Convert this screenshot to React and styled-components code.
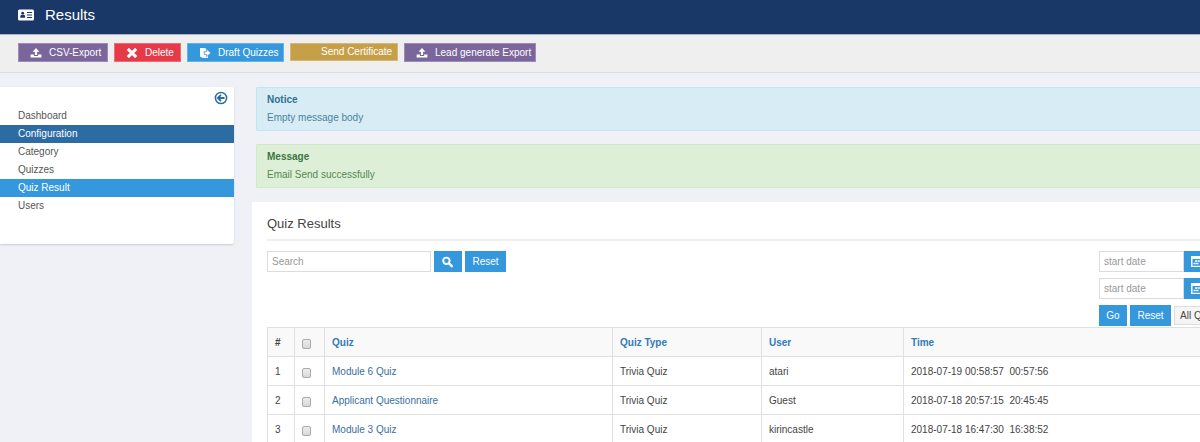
import React from 'react';
import styled, { createGlobalStyle } from 'styled-components';

const GlobalStyle = createGlobalStyle`
  *, *::before, *::after { box-sizing: border-box; }
  body {
    margin: 0;
    background: #f0f1f6;
    color: #444;
    font-family: "Liberation Sans", Arial, sans-serif;
    font-size: 10px;
    line-height: 14px;
    overflow-x: hidden;
  }
  button, input, select { font: inherit; margin: 0; border-radius: 0; }
  h1, h2, h3, p, ul { margin: 0; padding: 0; }
`;

const TopBar = styled.header`
  display: flex;
  align-items: center;
  gap: 11px;
  height: 35px;
  padding: 0 18px 4px;
  background: #1a3867;
  border-bottom: 1px solid #a9b3c6;
  color: #fff;
`;

const PageTitle = styled.h1`
  font-size: 15px;
  line-height: 20px;
  font-weight: 400;
`;

const Toolbar = styled.div`
  display: flex;
  align-items: flex-start;
  gap: 6px;
  height: 38px;
  padding: 8px 18px;
  background: #efefef;
  border-bottom: 1px solid #dddde1;
`;

const tones = {
  purple: '#7b669c',
  red: '#e63a48',
  blue: '#3598dc',
  gold: '#c5a048',
};

const ToolButton = styled.button`
  display: flex;
  align-items: center;
  gap: 7px;
  width: ${(p) => p.$width}px;
  height: ${(p) => (p.$plain ? 18 : 19)}px;
  padding: 0 0 0 11px;
  border: 1px solid rgba(255, 255, 255, 0.25);
  background: ${(p) => tones[p.$tone]};
  color: #fff;
  white-space: nowrap;
`;

const IconSlot = styled.span`
  display: flex;
  flex: 0 0 12px;
`;

const Columns = styled.div`
  display: flex;
  align-items: flex-start;
  gap: 18px;
  padding-top: 14px;
`;

const Sidebar = styled.nav`
  flex: 0 0 234px;
  padding: 4px 0 29px;
  background: #fff;
  border-radius: 0 2px 2px 0;
  box-shadow: 0 1px 2px rgba(0, 0, 0, 0.15);
`;

const CollapseRow = styled.div`
  display: flex;
  justify-content: flex-end;
  height: 16px;
  padding-right: 6px;
`;

const CollapseButton = styled.button`
  display: flex;
  padding: 0;
  border: 0;
  background: none;
  color: #2d6ca2;
`;

const Menu = styled.ul`
  list-style: none;
`;

const itemTones = { dark: '#2d6ca2', light: '#3598dc' };

const MenuLink = styled.a`
  display: block;
  padding-left: 18px;
  line-height: 18px;
  text-decoration: none;
  background: ${(p) => itemTones[p.$tone] || 'transparent'};
  color: ${(p) => (p.$tone ? '#fff' : '#555')};
`;

const Main = styled.main`
  flex: 1;
  min-width: 0;
`;

const alertTones = {
  info: { back: '#d8ecf6', edge: '#bce8f1', text: '#31708f' },
  success: { back: '#ddf0d7', edge: '#d0e9c6', text: '#3c763d' },
};

const Alert = styled.section`
  margin: 0 0 13px 4px;
  padding: 5px 10px;
  height: 44px;
  border: 1px solid ${(p) => alertTones[p.$tone].edge};
  border-right: 0;
  border-radius: 2px 0 0 2px;
  background: ${(p) => alertTones[p.$tone].back};
  color: ${(p) => alertTones[p.$tone].text};
`;

const AlertTitle = styled.h2`
  font-size: 10px;
  line-height: 14px;
  font-weight: 700;
  margin-bottom: 4px;
`;

const AlertText = styled.p`
  opacity: 0.85;
`;

const Panel = styled.section`
  margin-top: 14px;
  padding: 12px 0 0 15px;
  background: #fff;
`;

const PanelTitle = styled.h2`
  padding-bottom: 5px;
  border-bottom: 2px solid #f0f0f0;
  font-size: 13px;
  line-height: 20px;
  font-weight: 400;
`;

const Filters = styled.div`
  display: flex;
  align-items: flex-start;
  justify-content: space-between;
  padding: 10px 0 1px;
`;

const SearchForm = styled.form`
  display: flex;
  gap: 3px;
`;

const DateFilters = styled.div`
  display: flex;
  flex-direction: column;
  gap: 6px;
  width: 101px;
  overflow: hidden;
`;

const FieldRow = styled.div`
  display: flex;
  align-items: center;
  gap: ${(p) => p.$gap || 0}px;
`;

const TextInput = styled.input`
  flex: none;
  width: ${(p) => p.$width}px;
  height: 21px;
  padding: 0 4px;
  border: 1px solid #dcdcdc;
  background: #fff;
  color: #555;
  &::placeholder { color: #999; opacity: 1; }
`;

const ActionButton = styled.button`
  flex: none;
  display: flex;
  align-items: center;
  justify-content: center;
  width: ${(p) => p.$width}px;
  height: 21px;
  padding: 0;
  border: 0;
  background: #3598dc;
  color: #fff;
`;

const QuizSelect = styled.select`
  flex: none;
  width: 90px;
  height: 19px;
  padding: 0 5px;
  border: 1px solid #ddd;
  background: #f5f5f5;
  color: #444;
  appearance: none;
`;

const Results = styled.table`
  width: 100%;
  table-layout: fixed;
  border-collapse: collapse;
  th, td {
    height: 29px;
    padding: 2px 0 0 7px;
    border: 1px solid #e0e0e0;
    border-right: 0;
    text-align: left;
    vertical-align: middle;
    white-space: pre;
    overflow: hidden;
  }
  th { background: #f9f9f9; }
`;

const Col = styled.col`
  width: ${(p) => (p.$width ? `${p.$width}px` : 'auto')};
`;

const CellLink = styled.a`
  color: ${(p) => (p.$heading ? '#337ab7' : '#3a6f9f')};
  text-decoration: none;
`;

const Tick = styled.input`
  appearance: none;
  display: block;
  width: 9px;
  height: 10px;
  margin-top: 2px;
  border: 1px solid #aaa;
  border-radius: 2px;
  background: linear-gradient(#ececec, #d9d9d9);
  &:checked { background: #3598dc; }
`;

const IdCardIcon = () => (
  <svg width="16" height="12" viewBox="0 0 16 12" aria-hidden="true">
    <rect x="0" y="0.5" width="16" height="11" rx="1.5" fill="currentColor" />
    <circle cx="4.7" cy="4.2" r="1.4" fill="#1a3867" />
    <path d="M2.3 8.8V7.5q0-1.7 1.5-1.7h1.8q1.5 0 1.5 1.7v1.3z" fill="#1a3867" />
    <path d="M9 3.5h5M9 6h5M9 8.5h5" stroke="#1a3867" strokeWidth="1" />
  </svg>
);

const UploadIcon = () => (
  <svg width="12" height="10" viewBox="0 0 12 10" fill="currentColor" aria-hidden="true">
    <path d="M6 0l3.4 3.7H7.1v3.4H4.9V3.7H2.6z" />
    <path d="M.6 6.6h3.3v1.3h4.2V6.6h3.3v3H.6z" />
  </svg>
);

const CrossIcon = () => (
  <svg width="12" height="10" viewBox="0 0 12 10" aria-hidden="true">
    <path d="M1.8 .9l8.4 8.2M10.2 .9L1.8 9.1" stroke="currentColor" strokeWidth="3.1" />
  </svg>
);

const DraftIcon = () => (
  <svg width="12" height="10" viewBox="0 0 12 10" aria-hidden="true">
    <path d="M1 0h5l3 2.4V10H4L1 8.6z" fill="currentColor" />
    <path d="M5.2 3.6h2.4V1.2L12 5 7.6 8.6V6.4H5.2z" fill="currentColor" stroke="#3598dc" strokeWidth=".8" />
  </svg>
);

const BackIcon = () => (
  <svg width="14" height="14" viewBox="0 0 14 14" fill="none" stroke="currentColor" aria-hidden="true">
    <circle cx="7" cy="7" r="5.6" strokeWidth="1.5" />
    <path d="M10.5 7H4M7 3.8L3.8 7 7 10.2" strokeWidth="1.8" />
  </svg>
);

const SearchIcon = () => (
  <svg width="12" height="12" viewBox="0 0 12 12" fill="none" stroke="currentColor" aria-hidden="true">
    <circle cx="4.4" cy="4.8" r="3.2" strokeWidth="1.9" />
    <path d="M7 7.4l2.8 2.8" strokeWidth="2.4" strokeLinecap="round" />
  </svg>
);

const CalendarIcon = () => (
  <svg width="14" height="11" viewBox="0 0 14 11" aria-hidden="true">
    <path d="M0 0h14v11H0z" fill="currentColor" />
    <path d="M1.5 3h11v6.8h-11z" fill="#3598dc" />
    <path d="M4 5h7.5M2.5 7.6h5.5" stroke="currentColor" strokeWidth="1.5" strokeDasharray="2.2 .5" />
  </svg>
);

const tools = [
  { label: 'CSV-Export', tone: 'purple', width: 90, Icon: UploadIcon },
  { label: 'Delete', tone: 'red', width: 67, Icon: CrossIcon },
  { label: 'Draft Quizzes', tone: 'blue', width: 97, Icon: DraftIcon },
  { label: 'Send Certificate', tone: 'gold', width: 108 },
  { label: 'Lead generate Export', tone: 'purple', width: 132, Icon: UploadIcon },
];

const menu = [
  { label: 'Dashboard' },
  { label: 'Configuration', tone: 'dark' },
  { label: 'Category' },
  { label: 'Quizzes' },
  { label: 'Quiz Result', tone: 'light' },
  { label: 'Users' },
];

const rows = [
  { id: 1, quiz: 'Module 6 Quiz', user: 'atari', time: '2018-07-19 00:58:57  00:57:56' },
  { id: 2, quiz: 'Applicant Questionnaire', user: 'Guest', time: '2018-07-18 20:57:15  20:45:45' },
  { id: 3, quiz: 'Module 3 Quiz', user: 'kirincastle', time: '2018-07-18 16:47:30  16:38:52' },
];

const headings = ['Quiz', 'Quiz Type', 'User', 'Time'];

const DateField = ({ label }) => (
  <FieldRow>
    <TextInput type="text" placeholder="start date" aria-label={label} $width={85} />
    <ActionButton type="button" aria-label={`Pick ${label}`} $width={27}>
      <CalendarIcon />
    </ActionButton>
  </FieldRow>
);

export default function App() {
  return (
    <>
      <GlobalStyle />
      <TopBar>
        <IdCardIcon />
        <PageTitle>Results</PageTitle>
      </TopBar>
      <Toolbar>
        {tools.map(({ label, tone, width, Icon }) => (
          <ToolButton key={label} type="button" $tone={tone} $width={width} $plain={!Icon}>
            <IconSlot>{Icon && <Icon />}</IconSlot>
            {label}
          </ToolButton>
        ))}
      </Toolbar>
      <Columns>
        <Sidebar>
          <CollapseRow>
            <CollapseButton type="button" aria-label="Collapse menu">
              <BackIcon />
            </CollapseButton>
          </CollapseRow>
          <Menu>
            {menu.map(({ label, tone }) => (
              <li key={label}>
                <MenuLink href="#" $tone={tone}>{label}</MenuLink>
              </li>
            ))}
          </Menu>
        </Sidebar>
        <Main>
          <Alert $tone="info">
            <AlertTitle>Notice</AlertTitle>
            <AlertText>Empty message body</AlertText>
          </Alert>
          <Alert $tone="success">
            <AlertTitle>Message</AlertTitle>
            <AlertText>Email Send successfully</AlertText>
          </Alert>
          <Panel>
            <PanelTitle>Quiz Results</PanelTitle>
            <Filters>
              <SearchForm onSubmit={(e) => e.preventDefault()}>
                <TextInput type="text" placeholder="Search" aria-label="Search" $width={164} />
                <ActionButton type="submit" aria-label="Run search" $width={28}>
                  <SearchIcon />
                </ActionButton>
                <ActionButton type="reset" $width={41}>Reset</ActionButton>
              </SearchForm>
              <DateFilters>
                <DateField label="start date" />
                <DateField label="end date" />
                <FieldRow $gap={3}>
                  <ActionButton type="button" $width={28}>Go</ActionButton>
                  <ActionButton type="button" $width={41}>Reset</ActionButton>
                  <QuizSelect aria-label="Quiz">
                    <option>All Quizzes</option>
                  </QuizSelect>
                </FieldRow>
              </DateFilters>
            </Filters>
            <Results>
              <colgroup>
                <Col $width={27} />
                <Col $width={30} />
                <Col $width={288} />
                <Col $width={149} />
                <Col $width={142} />
                <Col />
              </colgroup>
              <thead>
                <tr>
                  <th scope="col">#</th>
                  <th scope="col"><Tick type="checkbox" aria-label="Select all" /></th>
                  {headings.map((h) => (
                    <th key={h} scope="col"><CellLink href="#" $heading>{h}</CellLink></th>
                  ))}
                </tr>
              </thead>
              <tbody>
                {rows.map((r) => (
                  <tr key={r.id}>
                    <td>{r.id}</td>
                    <td><Tick type="checkbox" aria-label={`Select ${r.quiz}`} /></td>
                    <td><CellLink href="#">{r.quiz}</CellLink></td>
                    <td>Trivia Quiz</td>
                    <td>{r.user}</td>
                    <td>{r.time}</td>
                  </tr>
                ))}
              </tbody>
            </Results>
          </Panel>
        </Main>
      </Columns>
    </>
  );
}
